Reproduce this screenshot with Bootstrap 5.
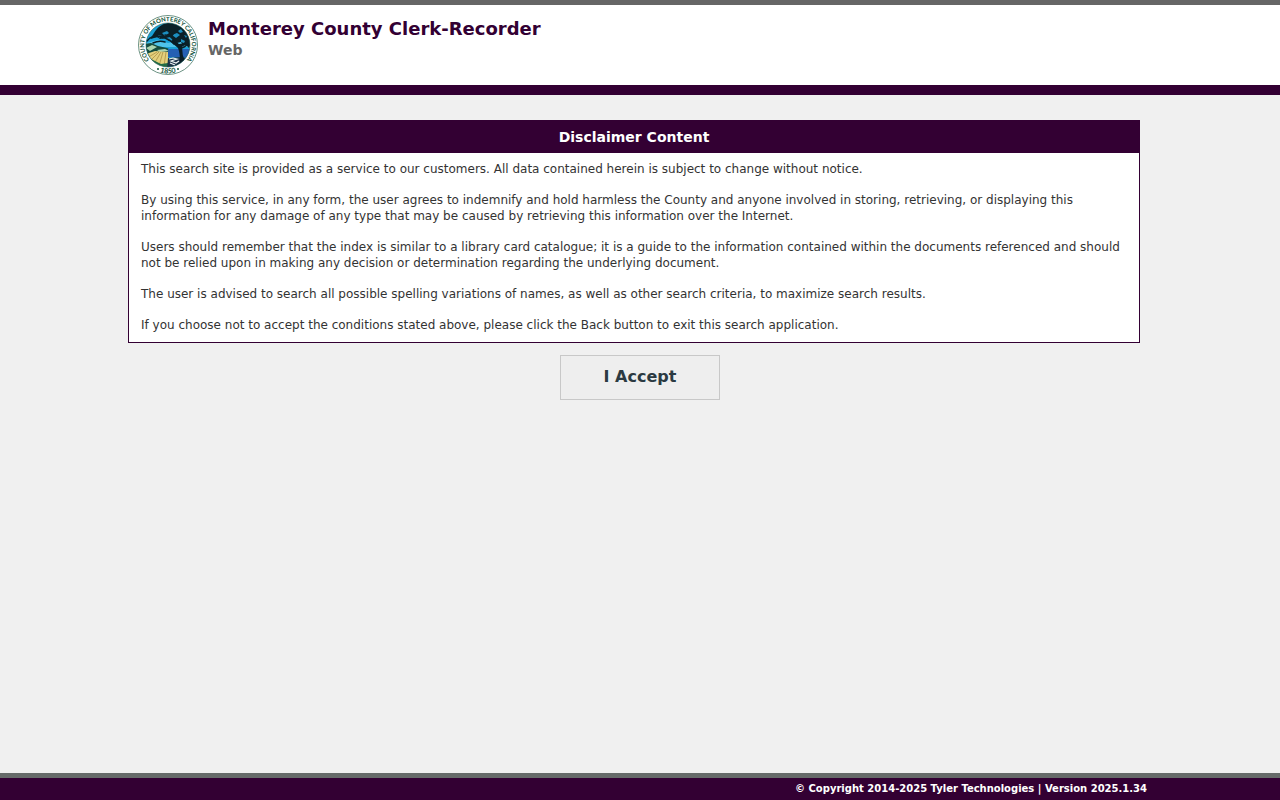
<!DOCTYPE html>
<html lang="en">
<head>
<meta charset="utf-8">
<meta name="viewport" content="width=device-width, initial-scale=1">
<title>Monterey County Clerk-Recorder</title>
<link href="https://cdn.jsdelivr.net/npm/bootstrap@5.3.0/dist/css/bootstrap.min.css" rel="stylesheet">
<style>
  :root { --plum: #330033; --stone: #666666; }
  body { font-family: "DejaVu Sans", Verdana, sans-serif; font-size: 12px; line-height: 16px; color: #333; background: #f0f0f0; }
  .page-width { width: 80%; }
  .site-header { background: #fff; border-top: 5px solid var(--stone); border-bottom: 10px solid var(--plum); }
  .header-inner { padding: 10px; gap: 10px; }
  .site-title { font-size: 18px; line-height: 24px; color: var(--plum); padding-top: 2px; }
  .site-subtitle { font-size: 14px; line-height: 18px; color: var(--stone); }
  .seal { width: 60px; height: 60px; }
  .main-area { padding-top: 25px; }
  .disclaimer { border-color: var(--plum); margin-right: 12px; }
  .disclaimer .card-header { background: var(--plum); color: #fff; font-size: 14px; line-height: 16px; padding: 8px; border: 0; }
  .disclaimer .card-body { padding: 8px 12px 9px; gap: 15px; color: #333; }
  .accept-btn { width: 160px; margin-top: 12px; padding: 9px 12px 11px; font-size: 16px; line-height: 23px; color: #2b3a42; background: #eee; border: 1px solid #c8c8c8; }
  .accept-btn:hover { background: #e2e2e2; border-color: #aaa; }
  .site-footer { background: var(--plum); border-top: 5px solid #666b69; color: #fff; font-size: 10px; line-height: 22px; }
  .footer-note { padding-right: 5px; }
</style>
</head>
<body class="d-flex flex-column min-vh-100">
<header class="site-header">
  <div class="page-width mx-auto d-flex align-items-start header-inner">
    <svg class="seal flex-shrink-0" viewBox="0 0 60 60" role="img" aria-label="County of Monterey seal">
      <defs>
        <clipPath id="scene"><circle cx="30" cy="30" r="22"/></clipPath>
        <path id="ringTop" d="M17.4 50.2A23.8 23.8 0 1 1 42.6 50.2"/>
        <path id="ringBottom" d="M8 48A28.5 28.5 0 0 0 52 48"/>
      </defs>
      <circle cx="30" cy="30" r="29.5" fill="#fff" stroke="#477764" stroke-width=".8"/>
      <g clip-path="url(#scene)">
        <path fill="#19a0d6" d="M8 8h44v44H8z"/>
        <path fill="#4fc3ea" d="M8 28l12-3 10 3 22-4v8H8z"/>
        <path fill="#154b3d" d="M7 29l6-1 7 3 9 2 6 3v5H7z"/>
        <path fill="#acd5b0" d="M8 33l6-3 5 2-7 4zM19 35l8-1 4 2-9 1z"/>
        <path fill="#2560b4" d="M30 34h24v8H30z"/>
        <path fill="#e3d07c" d="M8 39l9-3 13 1v15H16L8 46z"/>
        <path fill="none" stroke="#a5873e" stroke-width=".7" d="M19 37L9 43M21 37l-9 9M23 37l-7 12M25 37l-4 14M28 37l-2 14"/>
        <path fill="#216b45" d="M8 41l7 4 8 4 7-1v5H8z"/>
        <path fill="#1c3348" d="M30 43l12-1 11 1v12H29z"/>
        <path fill="none" stroke="#eef5f5" stroke-width="1.2" d="M31 44l4-1 4 1-6 2 5 2 3-2M32 48l5 2"/>
        <path fill="#0a2028" d="M16 18c4-7 11-11 18-10 9 0 17 7 18 14 1 4 1 8-1 11l-3-3-3 1-2-4-4 1-3-3-5 1-4-3-5 1-3-2-6 2 1-3z"/>
        <path fill="#1c8fc0" d="M24 18l5-2 2 2-4 3zM34 20l5-2 3 2-4 3zM28 23l4-1 3 3-3 1zM43 24l4 2-1 2-3-1zM20 20l4 1-3 2zM40 16l3-2 2 3-3 1zM46 20l3 1-1 2z"/>
        <path fill="none" stroke="#0a2028" stroke-linecap="round" stroke-width="1.5" d="M9 26q6-7 15-4t12 7M12 23q8-3 13 0M15 28q6-3 12-1M50 28q-3 5-8 5M37 16l-4 6M27 20q7 0 10 7"/>
        <path fill="#081c24" d="M35 24l6 5 7-1-4 4q0 8 3 15l3 4H37l5-4q0-9-2-14l-7-6z"/>
      </g>
      <circle cx="30" cy="30" r="22" fill="none" stroke="#285c54" stroke-width=".6"/>
      <g fill="#0f5239" font-family="Lato, 'Open Sans', sans-serif" font-weight="700" text-anchor="middle">
        <text font-size="6"><textPath href="#ringTop" startOffset="50%">COUNTY OF MONTEREY CALIFORNIA</textPath></text>
        <text font-size="7"><textPath href="#ringBottom" startOffset="50%">1850</textPath></text>
      </g>
      <circle cx="20" cy="54" r="1" fill="#0f5239"/>
      <circle cx="40" cy="54" r="1" fill="#0f5239"/>
    </svg>
    <div>
      <h1 class="site-title fw-bold mb-0">Monterey County Clerk-Recorder</h1>
      <div class="site-subtitle fw-bold">Web</div>
    </div>
  </div>
</header>

<main class="page-width mx-auto flex-grow-1 main-area">
  <section class="card rounded-0 disclaimer">
    <h2 class="card-header rounded-0 text-center fw-bold mb-0">Disclaimer Content</h2>
    <div class="card-body d-flex flex-column">
      <p class="mb-0">This search site is provided as a service to our customers. All data contained herein is subject to change without notice.</p>
      <p class="mb-0">By using this service, in any form, the user agrees to indemnify and hold harmless the County and anyone involved in storing, retrieving, or displaying this information for any damage of any type that may be caused by retrieving this information over the Internet.</p>
      <p class="mb-0">Users should remember that the index is similar to a library card catalogue; it is a guide to the information contained within the documents referenced and should not be relied upon in making any decision or determination regarding the underlying document.</p>
      <p class="mb-0">The user is advised to search all possible spelling variations of names, as well as other search criteria, to maximize search results.</p>
      <p class="mb-0">If you choose not to accept the conditions stated above, please click the Back button to exit this search application.</p>
    </div>
  </section>
  <div class="text-center">
    <button type="button" class="btn rounded-0 fw-bold accept-btn">I Accept</button>
  </div>
</main>

<footer class="site-footer fw-bold">
  <div class="page-width mx-auto text-end footer-note">© Copyright 2014-2025 Tyler Technologies | Version 2025.1.34</div>
</footer>
<script src="https://cdn.jsdelivr.net/npm/bootstrap@5.3.0/dist/js/bootstrap.bundle.min.js"></script>
</body>
</html>
